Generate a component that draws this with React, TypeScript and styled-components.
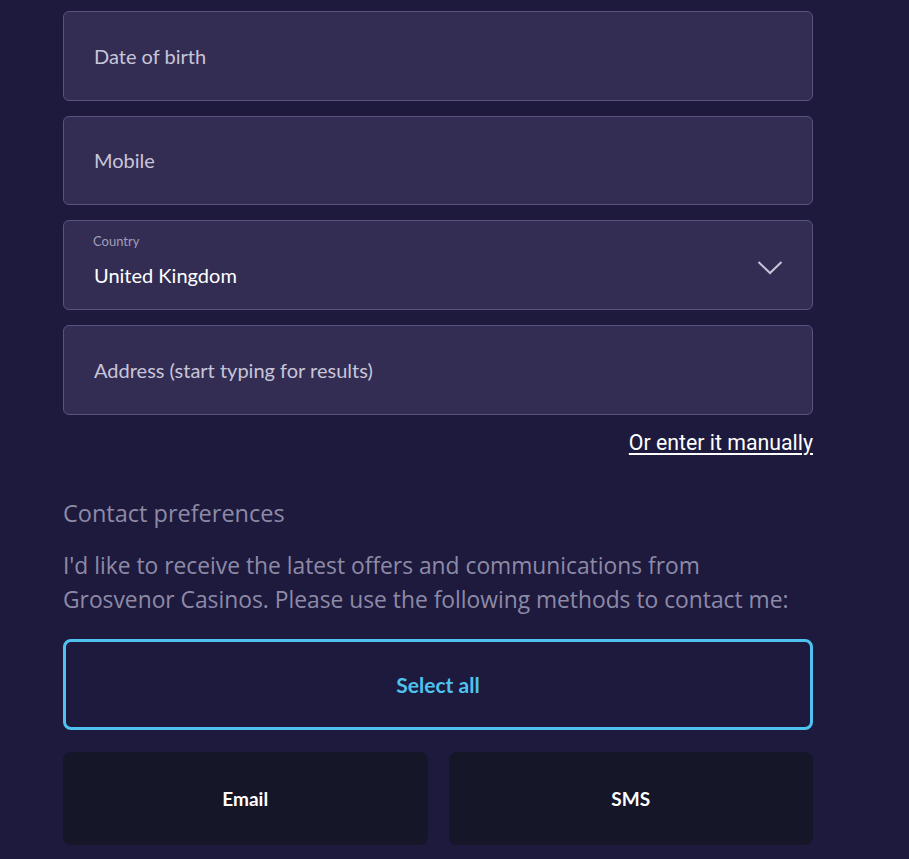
import React from 'react';
import styled, { createGlobalStyle } from 'styled-components';

const Global = createGlobalStyle`
  html, body {
    margin: 0;
    padding: 0;
    background: #1d1a3e;
  }
  * { box-sizing: border-box; }
`;

const Page = styled.div`
  min-height: 859px;
  background: #1d1a3e;
  padding: 11px 0 0 63px;
  font-family: Lato, "Noto Sans", sans-serif;
`;

const Form = styled.div`
  width: 750px;
  display: flex;
  flex-direction: column;
`;

const Field = styled.div`
  height: 89.67px;
  margin-bottom: 15px;
  background: #332d54;
  border: 1px solid #5a5380;
  border-radius: 6px;
  padding: 0 30px;
  display: flex;
  align-items: center;
  justify-content: space-between;
  color: #c9c5d9;
  font-size: 20px;
`;

const SelectBox = styled.div`
  display: flex;
  flex-direction: column;
  margin-bottom: 10px;
  > small {
    font-size: 13px;
    color: #a29eb8;
    margin-bottom: 14px;
    margin-left: -1px;
  }
  > span {
    font-size: 20px;
    color: #ffffff;
  }
`;

const LinkRow = styled.div`
  display: flex;
  justify-content: flex-end;
  > a {
    font-family: Roboto, "Noto Sans", sans-serif;
    font-size: 21.3px;
    color: #ffffff;
    text-decoration: underline;
    text-underline-offset: 3px;
  }
`;

const SectionTitle = styled.h3`
  margin: 42px 0 0;
  font-family: "Open Sans", "Noto Sans", sans-serif;
  font-weight: 400;
  font-size: 23.5px;
  color: #8e8aa6;
`;

const Para = styled.p`
  margin: 20px 0 0;
  font-family: "Open Sans", "Noto Sans", sans-serif;
  font-size: 22.8px;
  line-height: 34px;
  color: #8e8aa6;
`;

const SelectAll = styled.button`
  margin-top: 22px;
  height: 91px;
  width: 100%;
  background: transparent;
  border: 3px solid #4fc3ef;
  border-radius: 8px;
  color: #4fc3ef;
  font-family: Lato, sans-serif;
  font-weight: 700;
  font-size: 21px;
`;

const Methods = styled.div`
  margin-top: 22px;
  display: grid;
  grid-template-columns: 1fr 1fr;
  gap: 21px;
`;

const Method = styled.button`
  height: 93px;
  border: none;
  border-radius: 8px;
  background: #161629;
  color: #ffffff;
  font-family: Lato, sans-serif;
  font-weight: 700;
  font-size: 19px;
`;

const Chevron = () => (
  <svg width="26" height="16" viewBox="0 0 26 16" style={{ marginRight: -1, marginTop: 6 }}>
    <path d="M1.5 2 L13 13 L24.5 2" fill="none" stroke="#c9c5d9" strokeWidth="2" />
  </svg>
);

export default function App() {
  return (
    <Page>
      <Global />
      <Form>
        <Field>Date of birth</Field>
        <Field>Mobile</Field>
        <Field>
          <SelectBox>
            <small>Country</small>
            <span>United Kingdom</span>
          </SelectBox>
          <Chevron />
        </Field>
        <Field>Address (start typing for results)</Field>
        <LinkRow>
          <a>Or enter it manually</a>
        </LinkRow>
        <SectionTitle>Contact preferences</SectionTitle>
        <Para>
          I'd like to receive the latest offers and communications from
          <br />
          Grosvenor Casinos. Please use the following methods to contact me:
        </Para>
        <SelectAll>Select all</SelectAll>
        <Methods>
          <Method>Email</Method>
          <Method>SMS</Method>
        </Methods>
      </Form>
    </Page>
  );
}
